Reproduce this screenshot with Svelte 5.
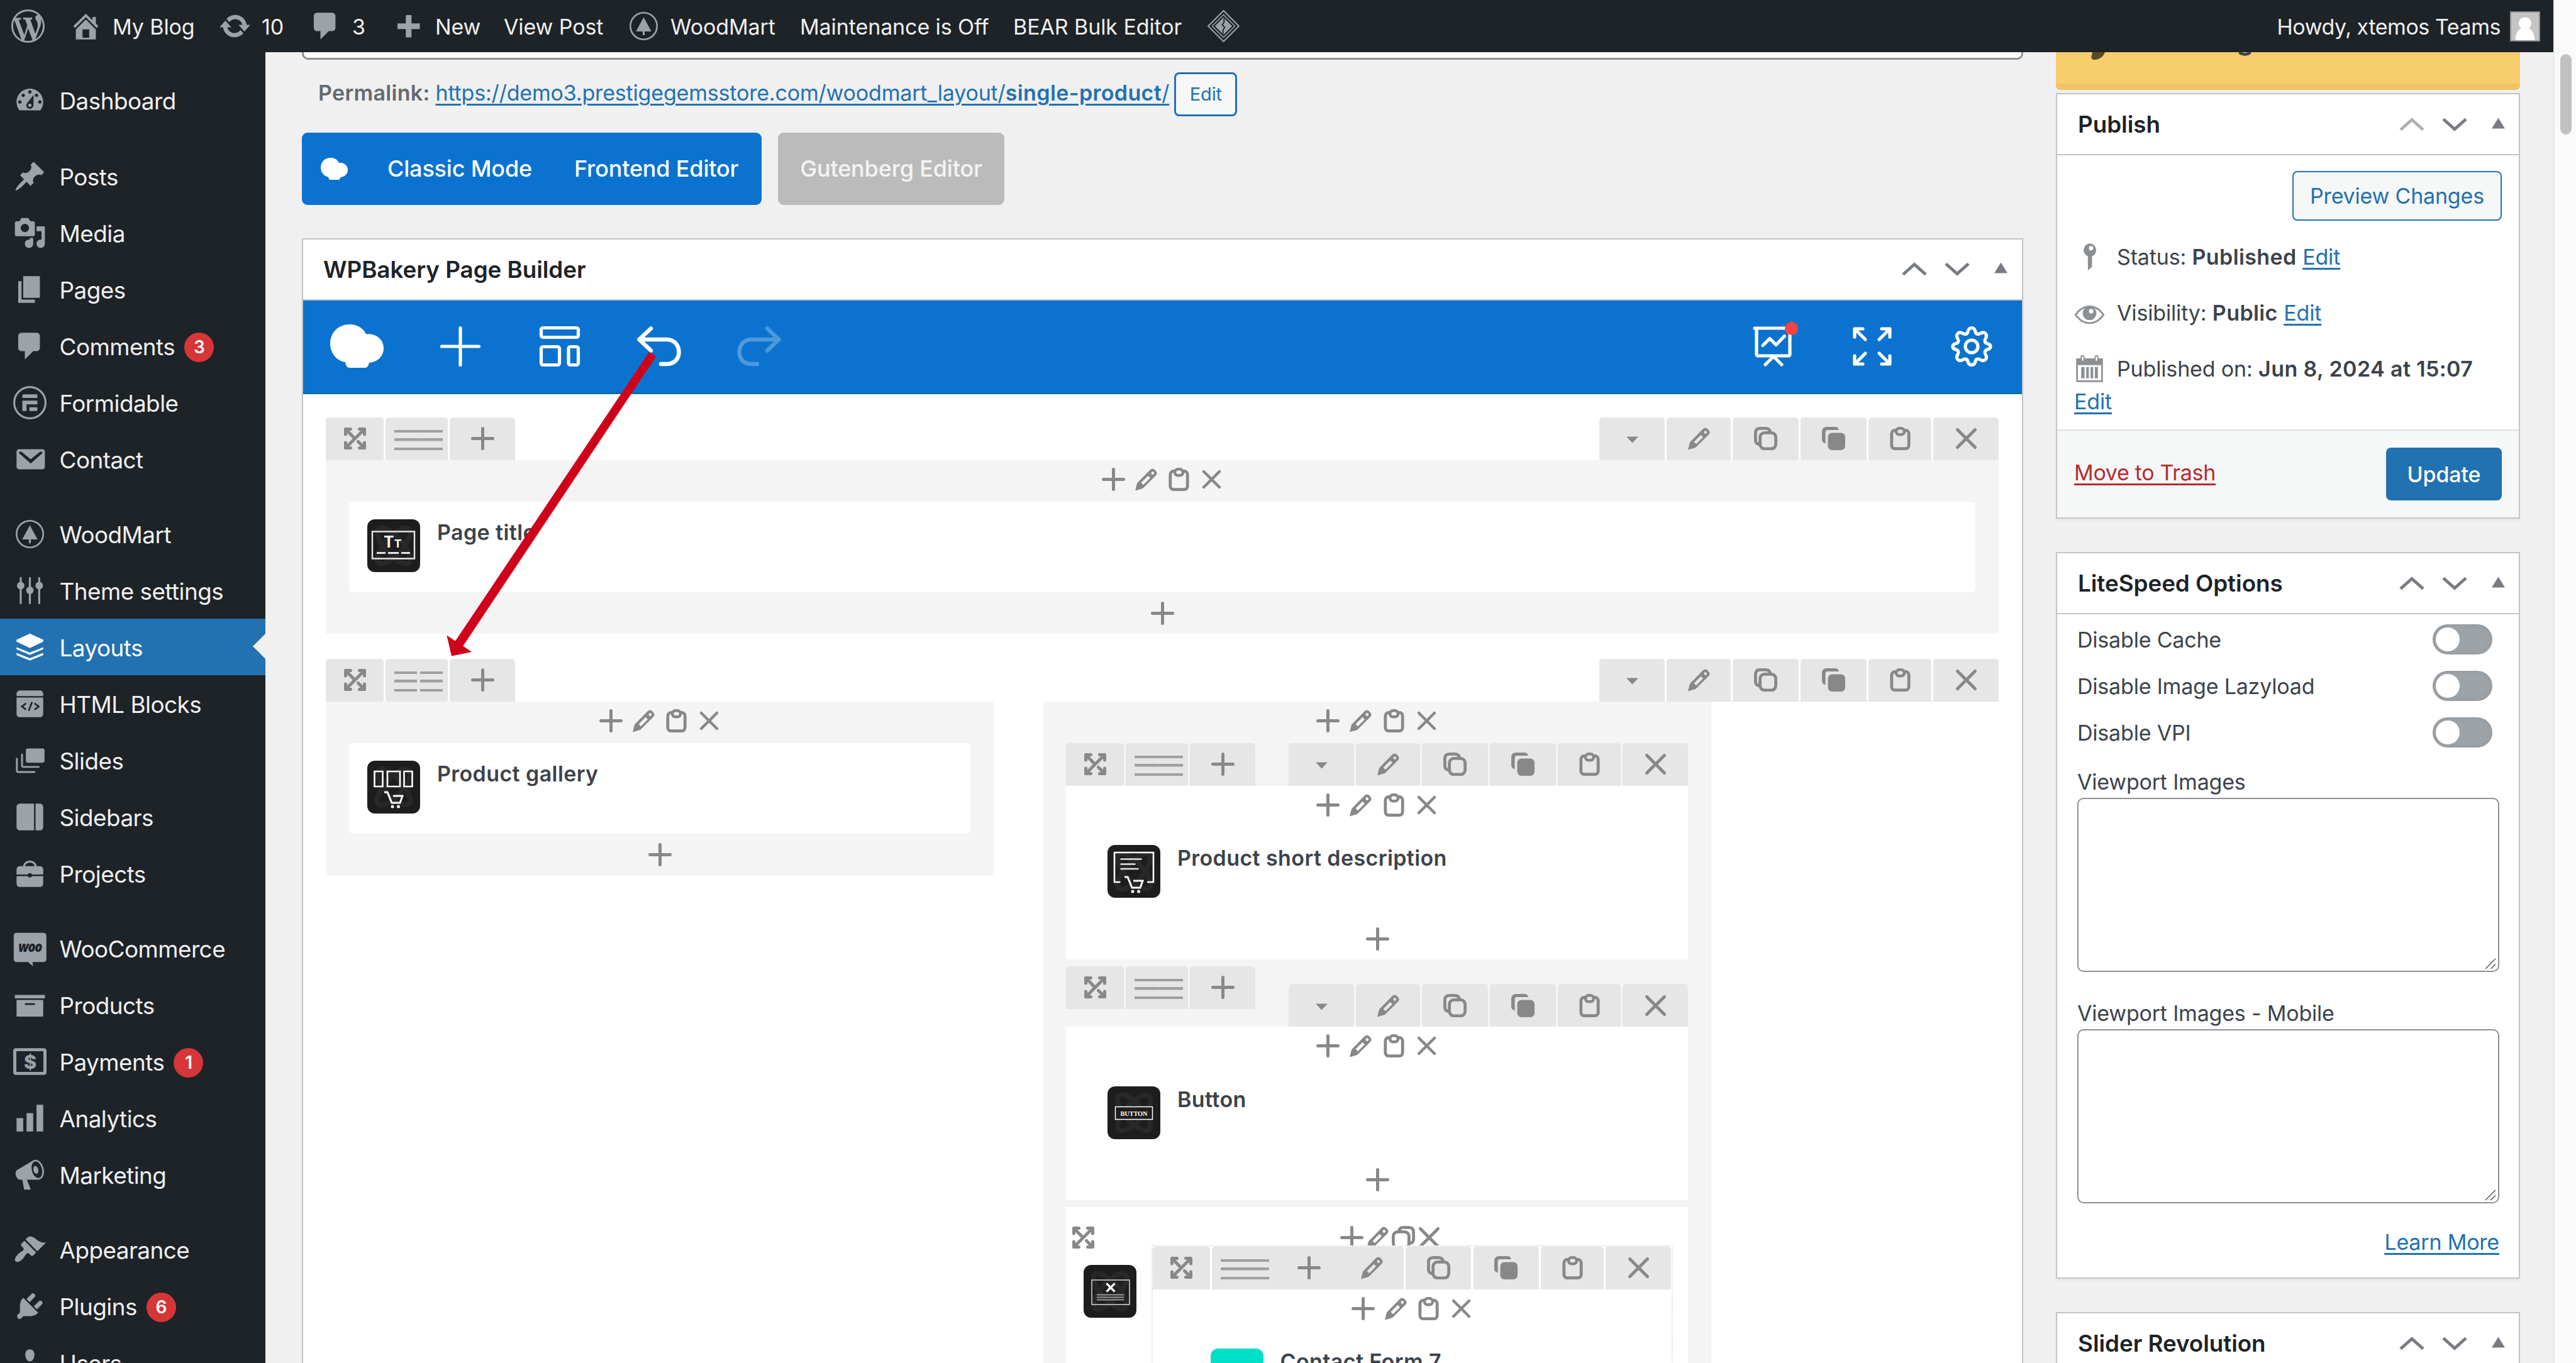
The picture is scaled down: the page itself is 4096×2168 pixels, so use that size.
<script>
  const icons = {
    wordpress: '<path d="M20 10c0-5.51-4.49-10-10-10C4.48 0 0 4.49 0 10c0 5.52 4.48 10 10 10 5.51 0 10-4.48 10-10zM7.78 15.37L4.37 6.22c.55-.02 1.17-.08 1.17-.08.5-.06.44-1.13-.06-1.11 0 0-1.45.11-2.37.11-.18 0-.37 0-.58-.01C4.12 2.69 6.87 1.11 10 1.11c2.33 0 4.45.87 6.05 2.34-.68-.11-1.65.39-1.65 1.58 0 .74.45 1.36.9 2.1.35.61.55 1.36.55 2.46 0 1.49-1.4 5-1.4 5l-3.03-8.37c.54-.02.82-.17.82-.17.5-.05.44-1.25-.06-1.22 0 0-1.44.12-2.38.12-.87 0-2.33-.12-2.33-.12-.5-.03-.56 1.2-.06 1.22l.92.08 1.26 3.41zM17.41 10c.24-.64.74-1.87.43-4.25.7 1.29 1.05 2.71 1.05 4.25 0 3.29-1.73 6.24-4.4 7.78.97-2.59 1.94-5.2 2.92-7.78zM6.1 18.09C3.12 16.65 1.11 13.53 1.11 10c0-1.3.23-2.48.72-3.59C3.25 10.3 4.67 14.2 6.1 18.09zm4.03-6.63l2.58 6.98c-.86.29-1.76.45-2.71.45-.79 0-1.57-.11-2.29-.33.81-2.38 1.62-4.74 2.42-7.1z"/>',
    home: '<path fill-rule="evenodd" d="M16 8.5l1.53 1.53-1.06 1.06L10 4.6l-6.47 6.49-1.06-1.06L10 2.5l4 4v-2h2v4zm-6-2.46l6 5.99V18H4v-5.97zM12 17v-5H8v5h4z"/>',
    update: '<path d="M10.2 3.28c3.53 0 6.43 2.61 6.92 6h2.08l-3.5 4-3.5-4h2.32c-.45-1.97-2.21-3.45-4.32-3.45-1.45 0-2.73.71-3.54 1.78L4.95 5.66C6.23 4.2 8.11 3.28 10.2 3.28zm-.4 13.44c-3.52 0-6.43-2.61-6.92-6H.8l3.5-4c1.17 1.33 2.33 2.67 3.5 4H5.48c.45 1.97 2.21 3.45 4.32 3.45 1.45 0 2.73-.71 3.54-1.78l1.71 1.95c-1.28 1.46-3.15 2.38-5.25 2.38z"/>',
    comments: '<path d="M5 2h9c1.1 0 2 .9 2 2v7c0 1.1-.9 2-2 2h-2l-5 5v-5H5c-1.1 0-2-.9-2-2V4c0-1.1.9-2 2-2z"/>',
    add: '<path d="M8.4 3.4h3.4v5h5v3.4h-5v5H8.400v-5h-5V8.400h5z"/>',
    woodmart: '<circle cx="10" cy="10" r="8" fill="none" stroke="currentColor" stroke-width="1"/><path d="M10 4.7l4.6 8.500h-4v2.300H9.400v-2.300h-4z"/>',
    diamond: '<path fill="none" stroke="currentColor" stroke-width=".8" d="M10 .8L19.200 10 10 19.200.8 10z"/><path fill="none" stroke="currentColor" stroke-width=".6" d="M10 3.200L16.800 10 10 16.800 3.200 10z"/><path d="M10 4.800L15.200 10 10 15.200 4.800 10z"/><path fill="none" stroke="#1d2327" stroke-width=".7" d="M10.300 5.500v2.200L9.200 9.300l1.500 1.500-1 1.600v2.200"/>',
    dashboard: '<path fill-rule="evenodd" d="M3.760 16h12.480c1.100-1.370 1.760-3.110 1.760-5 0-4.420-3.580-8-8-8s-8 3.580-8 8c0 1.890.66 3.630 1.760 5zM10 4c.55 0 1 .45 1 1s-.45 1-1 1-1-.45-1-1 .45-1 1-1zM6 6c.55 0 1 .45 1 1s-.45 1-1 1-1-.45-1-1 .45-1 1-1zm8 0c.55 0 1 .45 1 1s-.45 1-1 1-1-.45-1-1 .45-1 1-1zm-1.800.8L8.400 11.600c-.3.4-.5.9-.5 1.400 0 1.150.95 2.100 2.100 2.100s2.100-.95 2.100-2.100zM4 10c.55 0 1 .45 1 1s-.45 1-1 1-1-.45-1-1 .45-1 1-1zm12 0c.55 0 1 .45 1 1s-.45 1-1 1-1-.45-1-1 .45-1 1-1zm-5 3c0-.55-.45-1-1-1s-1 .45-1 1 .45 1 1 1 1-.45 1-1z"/>',
    post: '<path d="M10.440 3.020l1.820-1.820 6.360 6.350-1.830 1.820c-1.050-.68-2.480-.57-3.410.36l-.75.75c-.92.93-1.040 2.350-.35 3.410l-1.830 1.820-2.410-2.410-2.800 2.790c-.42.42-3.380 2.710-3.800 2.290s1.860-3.390 2.280-3.810l2.790-2.790L4.100 9.360l1.830-1.820c1.050.69 2.480.57 3.400-.36l.75-.75c.93-.92 1.050-2.350.36-3.410z"/>',
    media: '<path d="M13 11V4c0-.55-.45-1-1-1h-1.670L9 1H5L3.670 3H2c-.55 0-1 .45-1 1v7c0 .55.45 1 1 1h10c.55 0 1-.45 1-1zM7 4.500c1.380 0 2.500 1.120 2.500 2.500S8.380 9.500 7 9.500 4.500 8.380 4.500 7 5.620 4.500 7 4.500zM14 6h5v10.500c0 1.380-1.120 2.500-2.500 2.500S14 17.880 14 16.500s1.120-2.500 2.500-2.500c.17 0 .34.02.5.05V9h-3V6zm-4 8.050V13h2v3.500c0 1.380-1.120 2.500-2.500 2.500S7 17.880 7 16.500 8.120 14 9.500 14c.17 0 .34.02.5.05z"/>',
    page: '<path d="M6 15V2h10v13H6zm-1 1h8v2H3V5h2v11z"/>',
    formidable: '<circle cx="10" cy="10" r="9.400" fill="none" stroke="currentColor" stroke-width="1.200"/><path d="M6.300 5h8.200v2.200H5.500V5.800c0-.5.300-.8.800-.8zM5.500 8.800h9V11H8v4H5.500zM9.700 12.700h4.800v1.500c0 .5-.3.800-.8.800h-4z"/>',
    email: '<path d="M3.500 4h14c.83 0 1.500.67 1.500 1.500v9c0 .83-.67 1.500-1.500 1.500h-14c-.83 0-1.500-.67-1.500-1.500v-9C2 4.670 2.670 4 3.500 4z"/><path fill="#1d2327" d="M3.700 5.600c.5-.4.900-.3 1.400.1l5.400 4.300 5.400-4.300c.5-.4.900-.5 1.400-.1.300.3.300.6-.1 1l-6.700 5.900-6.700-5.900c-.4-.4-.4-.7-.1-1z"/>',
    sliders: '<path d="M3.900 2h1.200v16H3.900zM9.400 2h1.200v16H9.400zM15 2h1.200v16H15z"/><circle cx="4.500" cy="7" r="2.250"/><circle cx="10" cy="9.800" r="2.250"/><circle cx="15.600" cy="7" r="2.250"/>',
    layers: '<path d="M10 1.800l8 3.700v1.200l-8 3.800-8-3.800V5.500z"/><path d="M2 10l8 3.200L18 10v1.200l-8 3.400-8-3.400zM2 13.400l8 3.200 8-3.200v1.300L10 18l-8-3.300z"/>',
    code: '<path d="M4 2h12c1.100 0 2 .9 2 2v1.400H2V4c0-1.100.9-2 2-2zM2 6.200h16V16c0 1.100-.9 2-2 2H4c-1.100 0-2-.9-2-2z"/><path fill="none" stroke="#1d2327" stroke-width="1" d="M7.700 9.700L5.200 11.600l2.500 1.900M12.800 9.700l2.500 1.900-2.500 1.900M11.300 9l-2 5.200"/>',
    slides: '<rect x="7.600" y="2.800" width="11.200" height="8.600" rx="1.300"/><path fill="none" stroke="currentColor" stroke-width="1.100" stroke-linecap="round" d="M5.300 6.500v6.400c0 .6.300 1 1 1h9M2.200 9v7c0 .6.400 1 1 1h9.600"/>',
    sidebars: '<path d="M4 2h8.500v16H4c-1.100 0-2-.9-2-2V4c0-1.100.9-2 2-2zM13.400 2H16c1.100 0 2 .9 2 2v12c0 1.100-.9 2-2 2h-2.600z"/>',
    portfolio: '<path fill="none" stroke="currentColor" stroke-width="1.200" d="M6.500 6c0-1.800 1.400-3.200 3.500-3.200s3.500 1.400 3.500 3.200"/><path d="M4 5.600h12c1.100 0 2 .9 2 2v3h-6.700a1.400 1.400 0 0 0-2.600 0H2v-3c0-1.100.9-2 2-2zM2 11.500h6.700a1.400 1.400 0 0 0 2.600 0H18V16c0 1.100-.9 2-2 2H4c-1.100 0-2-.9-2-2z"/>',
    woo: '<path d="M2 .7h16.200c1 0 1.700.7 1.700 1.700v14.100c0 1-.7 1.700-1.700 1.700h-6.600l.3 2.600-3-2.600H2c-1 0-1.700-.7-1.700-1.700V2.400C.3 1.400 1 .7 2 .7z"/><text x="10.100" y="12" text-anchor="middle" font-family="Open Sans, sans-serif" font-size="8.800" font-weight="800" font-style="italic" fill="#1d2327" textLength="14" lengthAdjust="spacingAndGlyphs">woo</text>',
    products: '<path d="M19 4v2H1V4h18zM2 7h16v10H2V7zm11 3V9H7v1h6z"/>',
    payments: '<path fill-rule="evenodd" d="M1.500 2h17c.8 0 1.500.7 1.500 1.500v13c0 .8-.7 1.500-1.500 1.500h-17C.7 18 0 17.300 0 16.500v-13C0 2.700.7 2 1.500 2zM1.900 3.800v12.400h16.200V3.800z"/><text x="10" y="14.200" text-anchor="middle" font-family="Inter, sans-serif" font-size="11.500" font-weight="800">$</text>',
    chart: '<path d="M18 18V2h-4v16h4zm-6 0V7H8v11h4zm-6 0v-8H2v8h4z"/>',
    megaphone: '<path fill-rule="evenodd" d="M18.150 5.940c.46 1.620.38 3.220-.02 4.480-.42 1.280-1.260 2.180-2.300 2.480-.16.06-.26.06-.4.06-.06.02-.12.02-.18.02-.06.02-.14.02-.22.02h-6.800l2.220 5.500c.02.14-.06.26-.14.34-.08.1-.24.16-.34.16H6.950c-.1 0-.26-.06-.34-.16-.08-.08-.16-.2-.14-.34l-1-5.500H4.250l-.02-.02c-.5.06-1.080-.18-1.540-.62s-.88-1.080-1.060-1.880c-.24-.8-.2-1.560-.02-2.200.18-.62.58-1.080 1.060-1.300l.02-.02 9-5.400c.1-.06.18-.1.24-.16.06-.04.14-.08.24-.12.16-.08.28-.12.5-.18 1.040-.3 2.240.1 3.220.98s1.840 2.240 2.260 3.860zm-2.580 5.980h-.02c.4-.1.74-.34 1.040-.7.58-.7.86-1.760.86-3.040 0-.64-.1-1.300-.28-1.980-.34-1.360-1.020-2.500-1.780-3.240s-1.680-1.100-2.460-.88c-.82.22-1.400.96-1.700 2-.32 1.040-.28 2.360.06 3.720.38 1.360 1 2.500 1.800 3.240.78.74 1.620 1.100 2.480.88zm-2.540-7.080c.22-.04.42-.02.62.04.38.16.76.48 1.020 1s.42 1.200.42 1.780c0 .3-.04.56-.12.8-.18.48-.44.84-.86.94-.34.1-.8-.06-1.140-.4s-.64-.86-.78-1.500c-.18-.62-.12-1.240.02-1.720s.48-.84.82-.94z"/>',
    appearance: '<path d="M14.480 11.060L7.410 3.990l1.500-1.500c.5-.56 2.300-.47 3.510.32 1.210.8 1.430 1.280 2.910 2.100 1.180.64 2.450 1.260 4.450.85zm-.71.71L6.700 4.700 4.930 6.470c-.39.39-.39 1.020 0 1.410l1.060 1.060c.39.39.39 1.030 0 1.420-.6.6-1.430 1.110-2.210 1.690-.35.26-.7.53-1.010.84C1.430 14.230.4 16.080 1.400 17.070c.99 1 2.840-.03 4.180-1.360.31-.31.58-.66.85-1.020.57-.78 1.080-1.610 1.690-2.210.39-.39 1.020-.39 1.410 0l1.060 1.060c.39.39 1.020.39 1.410 0z"/>',
    plugins: '<path d="M13.110 4.360L9.870 7.600 8 5.730l3.240-3.240c.35-.34 1.050-.2 1.560.32.52.51.66 1.210.31 1.550zm-8 1.770l.91-1.120 9.010 9.010-1.190.84c-.71.71-2.630 1.160-3.820 1.160H6.140L4.900 17.260c-.59.59-1.540.59-2.120 0-.59-.58-.59-1.530 0-2.120l1.240-1.240v-3.880c0-1.130.4-3.190 1.090-3.890zm7.260 3.970l3.240-3.240c.34-.35 1.040-.21 1.550.31.52.51.66 1.210.31 1.550l-3.240 3.250z"/>',
    users: '<path d="M10 9.250c-2.270 0-2.730-3.440-2.730-3.440C7 4.020 7.820 2 9.970 2c2.160 0 2.980 2.020 2.710 3.810 0 0-.41 3.440-2.680 3.440zm0 2.570L12.720 10c2.390 0 4.520 2.330 4.520 4.530v2.490s-3.650 1.130-7.240 1.130c-3.650 0-7.240-1.130-7.240-1.130v-2.490c0-2.250 1.940-4.480 4.470-4.480z"/>',
    pin: '<path fill-rule="evenodd" d="M10 2a4 4 0 0 1 1.500 7.700V16L9 18.200V9.700A4 4 0 0 1 10 2zm.9 1.500a1.300 1.300 0 1 0 0 2.600 1.300 1.300 0 0 0 0-2.600z"/>',
    eye: '<g transform="translate(0 1.200)"><path fill-rule="evenodd" d="M10 4.500c4 0 7 2.500 9 5.500-2 3-5 5.500-9 5.500S3 13 1 10c2-3 5-5.500 9-5.500zm0 1C6.800 5.500 4.200 7.400 2.300 10c1.900 2.600 4.500 4.500 7.700 4.500s5.800-1.900 7.700-4.500C15.800 7.400 13.200 5.500 10 5.500z"/><path fill-rule="evenodd" d="M10 5a4 4 0 1 1 0 8.200A4 4 0 0 1 10 5zm1 1.500a1.400 1.400 0 1 0 0 2.800 1.400 1.400 0 0 0 0-2.800z"/></g>',
    calendar: '<path fill-rule="evenodd" d="M2 3.800h2.600V3c0-1.600 2.400-1.600 2.400 0v.8h6V3c0-1.600 2.400-1.600 2.400 0v.8H18V18H2zM5.400 3v2.200h.9V3c0-.5-.9-.5-.9 0zm8.300 0v2.200h.9V3c0-.5-.9-.5-.9 0zM3 7.800V17h14V7.800z"/><path d="M5 9h2v6.800H5zM8 9h1.600v6.800H8zM10.600 9h1.600v6.800h-1.600zM13.200 9h1.800v6.800h-1.800z"/>'
  };

  // Line icons of the page builder, drawn on a 37 × 37 grid
  const tools = {
    move: '<path d="M3.500 12V3.500h8M25.500 3.500h8V12M33.500 25v8.500h-8M11.500 33.500h-8V25M3.500 33.500l30-30M3.500 3.500l13.500 14M23.500 23.500l10 10" stroke-width="5"/>',
    plus: '<path d="M18.500 2.500v32M2.500 18.500h32" stroke-width="5"/>',
    pencil: '<path fill="currentColor" stroke="none" fill-rule="evenodd" d="M1 36.500L4 24.500 25 3q3.500-3 7 0l2 2.200q3.200 3.500 0 7L13 33zM10.500 23.800l3.500 3.500L25 16.200l-3.500-3.500zM28.800 6.300a2.300 2.300 0 1 0 0 4.600 2.300 2.300 0 0 0 0-4.600z"/>',
    copy: '<path d="M7 27.500c-3-1-4.600-3-4.600-6V10c0-5 2.600-7.600 7.600-7.600h8c4.500 0 7.200 2.200 7.600 6" stroke-width="4.800"/><rect x="9.600" y="9.400" width="25" height="25.400" rx="7" stroke-width="4.800"/>',
    copyFlip: '<path d="M30 27.500c3-1 4.600-3 4.600-6V10c0-5-2.600-7.600-7.600-7.600h-8c-4.500 0-7.200 2.200-7.600 6" stroke-width="4.800"/><rect x="2.400" y="9.400" width="25" height="25.400" rx="7" stroke-width="4.800"/>',
    clone: '<path fill="currentColor" stroke="none" d="M0 7.500C0 3 3 0 7.500 0H21c3.500 0 5.500 2 6 5H9C7 5 5.600 6.400 5.600 8.500v18C2 25.500 0 23.500 0 20z"/><rect fill="currentColor" stroke="none" x="9.500" y="9.500" width="27.500" height="27.500" rx="6.500"/>',
    clip: '<path d="M12 5.400H10c-3 0-5.200 2.600-5.200 5.600v18c0 3.500 2 5.600 5.200 5.600h17c3.200 0 5.200-2.100 5.200-5.600V11c0-3-2.200-5.600-5.200-5.600h-2" stroke-width="4.800"/><rect x="12" y="2.300" width="13" height="10" rx="5" stroke-width="4.600"/>',
    close: '<path d="M4.500 4.500l28 28M32.500 4.500l-28 28" stroke-width="5"/>',
    caret: '<path fill="currentColor" stroke="none" d="M9 15.500h19l-9.500 10z"/>'
  };

  const backdrop = '<rect width="84" height="84" rx="12" fill="#1d1d1d"/><g fill="none" stroke="#282828" stroke-width="8"><ellipse cx="42" cy="42" rx="14" ry="36" transform="rotate(42 42 42)"/><ellipse cx="42" cy="42" rx="14" ry="36" transform="rotate(-42 42 42)"/></g>';
  const cart = '<path fill="none" stroke="#fff" stroke-width="3" d="M0 2h5l7 17h13l4-11H14"/><circle cx="13" cy="25" r="2.500" fill="#fff"/><circle cx="22.500" cy="25" r="2.500" fill="#fff"/>';

  const thumbs = {
    title: backdrop + '<rect x="8" y="19.500" width="67" height="43" fill="none" stroke="#e4e4e4" stroke-width="2.500"/><text x="26.500" y="44.500" font-family="Roboto, sans-serif" font-weight="700" font-size="25" fill="#fff">T</text><text x="43" y="44.500" font-family="Roboto, sans-serif" font-weight="700" font-size="18" fill="#fff">T</text><path stroke="#e4e4e4" stroke-width="3" d="M15 53.500h14M33 53.500h17M54 53.500h14"/>',
    gallery: backdrop + '<g fill="none" stroke="#fff" stroke-width="2.600"><path d="M11.500 17h13v24h-13zM32 17h20v24H32zM58.500 17h13v24h-13z"/></g><g transform="translate(27 48)">' + cart + '</g>',
    description: backdrop + '<path fill="none" stroke="#fff" stroke-width="2.600" d="M20.500 59H11V12h62v47H63"/><path stroke="#e4e4e4" stroke-width="2.600" d="M20.500 22.500h34M20.500 30.500h24M20.500 38h29"/><g transform="translate(27 49)">' + cart + '</g>',
    button: backdrop + '<rect x="12.500" y="32.500" width="59" height="20" fill="#1d1d1d" stroke="#fff" stroke-width="1.500"/><text x="42" y="46.800" text-anchor="middle" font-family="Liberation Serif, serif" font-weight="700" font-size="10.500" fill="#fff" textLength="43">BUTTON</text>',
    popup: backdrop + '<rect x="13" y="24" width="60" height="39" fill="none" stroke="#aaa" stroke-width="2"/><path stroke="#fff" stroke-width="3.500" d="M36.500 29.500l13 13M49.500 29.500l-13 13"/><path stroke="#999" stroke-width="2.200" d="M21 47.500h43M21 51.500h43M21 55.500h43"/>',
    contact: '<rect width="84" height="84" rx="12" fill="#00dfc8"/>'
  };

  const barItems = [
    { icon: 'wordpress' },
    { icon: 'home', label: 'My Blog' },
    { icon: 'update', label: '10' },
    { icon: 'comments', label: '3' },
    { icon: 'add', label: 'New' },
    { label: 'View Post' },
    { icon: 'woodmart', label: 'WoodMart' },
    { label: 'Maintenance is Off' },
    { label: 'BEAR Bulk Editor' },
    { icon: 'diamond' }
  ];

  const menuGroups = [
    [{ icon: 'dashboard', label: 'Dashboard' }],
    [
      { icon: 'post', label: 'Posts' },
      { icon: 'media', label: 'Media' },
      { icon: 'page', label: 'Pages' },
      { icon: 'comments', label: 'Comments', count: 3 },
      { icon: 'formidable', label: 'Formidable' },
      { icon: 'email', label: 'Contact' }
    ],
    [
      { icon: 'woodmart', label: 'WoodMart' },
      { icon: 'sliders', label: 'Theme settings' },
      { icon: 'layers', label: 'Layouts', current: true },
      { icon: 'code', label: 'HTML Blocks' },
      { icon: 'slides', label: 'Slides' },
      { icon: 'sidebars', label: 'Sidebars' },
      { icon: 'portfolio', label: 'Projects' }
    ],
    [
      { icon: 'woo', label: 'WooCommerce' },
      { icon: 'products', label: 'Products' },
      { icon: 'payments', label: 'Payments', count: 1 },
      { icon: 'chart', label: 'Analytics' },
      { icon: 'megaphone', label: 'Marketing' }
    ],
    [
      { icon: 'appearance', label: 'Appearance' },
      { icon: 'plugins', label: 'Plugins', count: 6 },
      { icon: 'users', label: 'Users' }
    ]
  ];

  let toggles = $state([
    { label: 'Disable Cache', on: false },
    { label: 'Disable Image Lazyload', on: false },
    { label: 'Disable VPI', on: false }
  ]);
</script>

{#snippet dashicon(name)}
  <svg class="dashicon" viewBox="0 0 20 20" fill="currentColor">{@html icons[name]}</svg>
{/snippet}

{#snippet tool(name)}
  <svg class="tool" viewBox="0 0 37 37" fill="none" stroke="currentColor" stroke-linecap="round" stroke-linejoin="round">{@html tools[name]}</svg>
{/snippet}

{#snippet bakery()}
  <svg class="bakery" viewBox="0 0 85 69" fill="#fff">
    <path d="M31 0c12 0 22 6 26 15.500C73 14 85 24 85 38c0 13-10 22-23 23-1 5-3 8-7 8H31c-4 0-6-3-7-9C10 58 0 45 0 31 0 13 13 0 31 0z" />
  </svg>
{/snippet}

{#snippet boxHeader(title, first)}
  <header class="box-header">
    <h2>{title}</h2>
    <svg class="handles" viewBox="0 0 168 24" fill="none" stroke="#787c82" stroke-width="5">
      <path class:faded={first} d="M2 20.500L20 4.500l18 16" />
      <path d="M70 3.500l18 16 18-16" />
      <path fill="#787c82" stroke="none" d="M157.500 1.500L168 18.500h-21z" />
    </svg>
  </header>
{/snippet}

{#snippet leftTabs(split)}
  <div class="tabs">
    <button class="tab drag">{@render tool('move')}</button>
    <button class="tab lines">
      <span class="bars" class:split><i></i><i></i></span>
    </button>
    <button class="tab">{@render tool('plus')}</button>
  </div>
{/snippet}

{#snippet rightTabs()}
  <div class="tabs right">
    <button class="tab">{@render tool('caret')}</button>
    <button class="tab w-pencil">{@render tool('pencil')}</button>
    <button class="tab w-copy">{@render tool('copy')}</button>
    <button class="tab w-copy">{@render tool('clone')}</button>
    <button class="tab w-clip">{@render tool('clip')}</button>
    <button class="tab">{@render tool('close')}</button>
  </div>
{/snippet}

{#snippet columnTools()}
  <div class="column-tools">
    {#each ['plus', 'pencil', 'clip', 'close'] as name}
      <span class="cell" class:small={name === 'close'}>{@render tool(name)}</span>
    {/each}
  </div>
{/snippet}

{#snippet element(thumb, title)}
  <div class="element">
    <svg class="thumb" viewBox="0 0 84 84">{@html thumbs[thumb]}</svg>
    <h4>{title}</h4>
  </div>
{/snippet}

{#snippet column(thumb, title)}
  {@render columnTools()}
  {@render element(thumb, title)}
  <div class="append">{@render tool('plus')}</div>
{/snippet}

<div class="screen">
  <div class="window">
    <nav class="adminbar">
      {#each barItems as item}
        <span class="bar-item">
          {#if item.icon}{@render dashicon(item.icon)}{/if}
          {#if item.label}<span class="bar-label">{item.label}</span>{/if}
        </span>
      {/each}
      <span class="account">
        <span class="bar-label">Howdy, xtemos Teams</span>
        <svg class="avatar" viewBox="0 0 48 48">
          <rect x="1" y="1" width="46" height="46" fill="#c4c4c4" stroke="#8c8f94" stroke-width="2" />
          <path fill="#fff" d="M24 9.500c6 0 10 4 10 9.500 0 3.500-1.500 6.500-4 8 5 2 9 8 9.500 19h-31C9 35 12.500 29 18 27c-2.500-1.500-4-4.500-4-8 0-5.500 4-9.500 10-9.500z" />
        </svg>
      </span>
    </nav>

    <div class="body">
      <aside class="menu">
        {#each menuGroups as group}
          <ul>
            {#each group as item}
              <li class:current={item.current}>
                {@render dashicon(item.icon)}
                <span class="label">{item.label}</span>
                {#if item.count}<span class="count">{item.count}</span>{/if}
              </li>
            {/each}
          </ul>
        {/each}
      </aside>

      <main>
        <div class="title-field"></div>
        <div class="permalink">
          <strong>Permalink:</strong>
          <a href="#permalink">https://demo3.prestigegemsstore.com/woodmart_layout/<b>single-product</b>/</a>
          <button class="edit-slug">Edit</button>
        </div>
        <div class="modes">
          <div class="mode-switch">
            {@render bakery()}
            <span class="classic">Classic Mode</span>
            <span>Frontend Editor</span>
          </div>
          <button class="gutenberg">Gutenberg Editor</button>
        </div>

        <section class="box builder">
          {@render boxHeader('WPBakery Page Builder', false)}
          <div class="toolbar">
            <span class="logo">{@render bakery()}</span>
            <svg viewBox="0 0 64 64"><path d="M32 2.500v59M2.500 32h59" /></svg>
            <svg viewBox="0 0 64 64">
              <rect x="2.500" y="2.500" width="59" height="15" rx="3" />
              <rect x="2.500" y="32.500" width="29" height="29" rx="3" />
              <rect x="46" y="32.500" width="15.500" height="29" rx="3" />
            </svg>
            <svg class="undo" viewBox="0 0 70 64"><path d="M22 3.500L3.500 21 22 38.500M3.500 21H47c12 0 19.500 9 19.500 20S59 60 47 60h-9" /></svg>
            <svg class="redo" viewBox="0 0 70 64"><path d="M48 3.500L66.500 21 48 38.500M66.500 21H23C11 21 3.500 30 3.500 41S11 60 23 60h9" /></svg>
            <div class="toolbar-right">
              <span class="seo">
                <svg viewBox="0 0 64 64">
                  <path d="M3 3h58M6 3v41c0 2 1 3 3 3h47c2 0 3-1 3-3V3M33 48L20 61M33 48l13 13M16 30.500l11-11 10 10 13.500-14" />
                </svg>
                <i class="dot"></i>
              </span>
              <svg viewBox="0 0 64 64">
                <path d="M4 17V4h13M4 4l17 17M47 4h13v13M60 4L43 21M60 47v13H47M60 60L43 43M17 60H4V47M4 60l17-17" />
              </svg>
              <svg viewBox="0 0 64 64">
                <path d="M32 2.500c3 0 5 2 6 6s4 5 7.500 3 6.500-2 8.500 0 2 5 0 8.500-1 6.500 3 7.500 5 2.500 5 4.500-1.500 4-5 5-5 4-3 7.500 2 6.500 0 8.500-5 2-8.500 0-6.500-1-7.500 3-3 5.500-6 5.500-5-1.500-6-5.500-4-5-7.500-3-6.500 2-8.500 0-2-5 0-8.500 1-6.500-3-7.500-5-3-5-5 1-3.500 5-4.500 5-4 3-7.500-2-6.500 0-8.500 5-2 8.500 0 6.500 1 7.500-3 3-6 6-6z" />
                <circle cx="32" cy="32" r="10" />
              </svg>
            </div>
          </div>

          <div class="canvas">
            <div class="row">
              <div class="row-tabs">{@render leftTabs(false)}{@render rightTabs()}</div>
              <div class="column">{@render column('title', 'Page title')}</div>
            </div>

            <div class="row">
              <div class="row-tabs">{@render leftTabs(true)}{@render rightTabs()}</div>
              <div class="columns">
                <div class="column third">{@render column('gallery', 'Product gallery')}</div>
                <div class="column third">
                  {@render columnTools()}
                  <div class="inner-row">
                    <div class="row-tabs">{@render leftTabs(false)}{@render rightTabs()}</div>
                    <div class="column">{@render column('description', 'Product short description')}</div>
                  </div>
                  <div class="inner-row staggered">
                    <div class="row-tabs">{@render leftTabs(false)}{@render rightTabs()}</div>
                    <div class="column">{@render column('button', 'Button')}</div>
                  </div>
                  <div class="popup">
                    <div class="popup-tools">
                      {@render tool('move')}
                      <div class="popup-actions">
                        {#each ['plus', 'pencil', 'copyFlip', 'close'] as name}
                          {@render tool(name)}
                        {/each}
                      </div>
                    </div>
                    <div class="popup-content">
                      <svg class="thumb" viewBox="0 0 84 84">{@html thumbs.popup}</svg>
                      <div class="nested">
                        <div class="nested-tabs">
                          <button class="tab n-move">{@render tool('move')}</button>
                          <button class="tab n-wide">
                            <span class="bars"><i></i><i></i></span>
                            {@render tool('plus')}
                            {@render tool('pencil')}
                          </button>
                          <button class="tab">{@render tool('copy')}</button>
                          <button class="tab">{@render tool('clone')}</button>
                          <button class="tab w-clip">{@render tool('clip')}</button>
                          <button class="tab">{@render tool('close')}</button>
                        </div>
                        {@render columnTools()}
                        {@render element('contact', 'Contact Form 7')}
                      </div>
                    </div>
                  </div>
                </div>
              </div>
            </div>
          </div>
        </section>
      </main>

      <aside class="side">
        <div class="notice">
          <svg viewBox="0 0 738 60">
            <path fill="#5a4a27" d="M58 0h20c-2 6-8 12-17 12-5 0-5-4-4-7z" />
            <path fill="none" stroke="#3c434a" stroke-width="4.500" d="M292 0c3 4.500 14 4.500 17 0" />
          </svg>
        </div>

        <section class="box publish">
          {@render boxHeader('Publish', true)}
          <div class="preview"><button class="outline">Preview Changes</button></div>
          <p class="status">{@render dashicon('pin')}<span>Status: <b>Published</b> <a href="#status">Edit</a></span></p>
          <p class="status">{@render dashicon('eye')}<span>Visibility: <b>Public</b> <a href="#visibility">Edit</a></span></p>
          <p class="status">{@render dashicon('calendar')}<span>Published on: <b>Jun 8, 2024 at 15:07</b></span></p>
          <a class="edit-date" href="#date">Edit</a>
          <footer>
            <a class="trash" href="#trash">Move to Trash</a>
            <button class="primary">Update</button>
          </footer>
        </section>

        <section class="box litespeed">
          {@render boxHeader('LiteSpeed Options', false)}
          <div class="options">
            {#each toggles as item}
              <div class="option">
                <span>{item.label}</span>
                <button class="toggle" class:on={item.on} aria-label={item.label} onclick={() => (item.on = !item.on)}><i></i></button>
              </div>
            {/each}
            {#each ['Viewport Images', 'Viewport Images - Mobile'] as label}
              <div class="field">
                <span>{label}</span>
                <div class="textarea">
                  <svg viewBox="0 0 18 18" fill="none" stroke="#50575e" stroke-width="1.500"><path d="M1 17L17 1M9.500 17l7.500-7.500" /></svg>
                </div>
              </div>
            {/each}
            <a class="learn" href="#learn">Learn More</a>
          </div>
        </section>

        <section class="box">
          {@render boxHeader('Slider Revolution', false)}
          <div class="rest"></div>
        </section>
      </aside>
    </div>
  </div>
  <div class="scrollbar"><i></i></div>

  <!-- Arrow pointing from undo to the row layout switch -->
  <svg class="arrow" viewBox="0 0 4096 2168">
    <path fill="#d0021b" d="M1032.300 559.600L1043.200 567.300 736.300 1027.600 750 1036.900 718 1043.400 710.300 1010.400 724 1019.600z" />
  </svg>
</div>

<style>
  :global(body) {
    background: #f0f0f0;
    overflow: hidden;
  }

  .screen, .screen :global(*) {
    box-sizing: border-box;
  }

  .screen {
    position: relative;
    display: flex;
    width: 4096px;
    height: 2168px;
    overflow: hidden;
    background: #f0f0f0;
    color: #3c434a;
    font-family: Inter, "Liberation Sans", sans-serif;
    font-size: 34px;
    letter-spacing: -0.15px;
  }

  button {
    margin: 0;
    padding: 0;
    border: 0;
    background: none;
    color: inherit;
    font: inherit;
    letter-spacing: inherit;
  }

  h2, h4, p, ul {
    margin: 0;
    padding: 0;
  }

  a {
    color: #2271b1;
    text-decoration-thickness: 2.6px;
    text-underline-offset: 5px;
  }

  b, strong {
    font-weight: 600;
    letter-spacing: 0.4px;
  }

  svg {
    display: block;
    flex: none;
  }

  .window {
    width: 4060px;
    display: flex;
    flex-direction: column;
  }

  .dashicon {
    width: 53px;
    height: 53px;
    overflow: visible;
  }

  /* Admin bar */
  .adminbar {
    flex: none;
    height: 83px;
    padding: 0 21px 0 18px;
    display: grid;
    grid-template-columns: 92px 237px 144px 132px 178px 196px 275px 339px 308px 1fr 460px;
    align-items: center;
    background: #1d2327;
    color: #f0f0f1;
    letter-spacing: -0.1px;
    white-space: nowrap;
  }

  .bar-item {
    display: flex;
    align-items: center;
    gap: 16px;
  }

  .bar-item .dashicon {
    color: #9ca2a7;
  }

  .bar-label {
    padding-top: 2px;
  }

  .account {
    display: flex;
    align-items: center;
    justify-content: flex-end;
    gap: 15px;
    letter-spacing: -0.45px;
  }

  .avatar {
    width: 48px;
    height: 48px;
  }

  .body {
    flex: 1;
    min-height: 0;
    display: flex;
  }

  /* Menu */
  .menu {
    flex: none;
    width: 422px;
    padding-top: 31px;
    background: #1d2327;
    color: #f0f0f1;
    font-size: 36.800px;
    letter-spacing: -0.5px;
    overflow: hidden;
  }

  .menu ul {
    list-style: none;
    margin-bottom: 29px;
  }

  .menu ul:first-child {
    margin-bottom: 31px;
  }

  .menu li {
    position: relative;
    height: 90px;
    padding-left: 20.500px;
    display: flex;
    align-items: center;
  }

  .menu .dashicon {
    color: #9ca2a7;
  }

  .label {
    margin-left: 21px;
    padding-top: 3px;
  }

  .current {
    background: #2271b1;
    color: #fff;
  }

  .menu .current .dashicon {
    color: #fff;
  }

  .current::after {
    content: "";
    position: absolute;
    right: 0;
    top: 24px;
    border: 20.500px solid transparent;
    border-right-color: #f0f0f0;
    border-left: 0;
  }

  .count {
    width: 47px;
    height: 47px;
    margin: 4px 0 0 15px;
    border-radius: 50%;
    background: #d63638;
    color: #fff;
    font-size: 28px;
    font-weight: 600;
    line-height: 47px;
    text-align: center;
  }

  /* Editor column */
  main {
    flex: none;
    width: 2737px;
    margin-left: 58px;
  }

  .title-field {
    height: 11.500px;
    border: 3px solid #8c8f94;
    border-top: 0;
    border-radius: 0 0 10px 10px;
    background: #fff;
  }

  .permalink {
    height: 70px;
    margin-top: 20px;
    padding-left: 26px;
    display: flex;
    align-items: center;
    white-space: nowrap;
  }

  .permalink strong, .permalink a {
    margin-top: -4px;
  }

  .permalink strong {
    margin-right: 9px;
    color: #646970;
    letter-spacing: 0.3px;
  }

  .permalink a {
    letter-spacing: -0.18px;
  }

  .edit-slug {
    width: 100px;
    height: 70px;
    margin-left: 8px;
    border: 3px solid #2271b1;
    border-radius: 8px;
    background: #f6f7f7;
    color: #2271b1;
    font-size: 29px;
  }

  .modes {
    height: 115px;
    margin-top: 26px;
    display: flex;
    gap: 26px;
    font-size: 36px;
    letter-spacing: -0.18px;
    white-space: nowrap;
  }

  .mode-switch {
    width: 731px;
    padding-left: 30px;
    border-radius: 9px;
    background: #0b73cf;
    color: #fff;
    display: flex;
    align-items: center;
    font-weight: 500;
  }

  .mode-switch .bakery {
    width: 43px;
    height: 35px;
  }

  .classic {
    margin: 0 67px 0 63px;
  }

  .gutenberg {
    width: 360px;
    border-radius: 9px;
    background: #bbb;
    color: #f4f4f4;
    font-weight: 500;
  }

  .box {
    border: 2.600px solid #c3c4c7;
    background: #fff;
    box-shadow: 0 2.600px 2.600px rgba(0, 0, 0, 0.04);
  }

  .box-header {
    height: 97px;
    padding: 0 22px 0 32px;
    border-bottom: 2.600px solid #c3c4c7;
    display: flex;
    align-items: center;
    justify-content: space-between;
  }

  .side .box-header {
    padding-left: 33px;
  }

  h2 {
    color: #1d2327;
    font-size: 36.800px;
    font-weight: 600;
    letter-spacing: -0.05px;
    white-space: nowrap;
  }

  .handles {
    width: 168px;
    height: 24px;
    overflow: visible;
  }

  .faded {
    opacity: 0.6;
  }

  .builder {
    margin-top: 53px;
    height: 1900px;
  }

  .builder .box-header {
    padding-right: 23px;
  }

  .toolbar {
    height: 149px;
    padding: 0 48px 0 43px;
    border-bottom: 3px solid #0473aa;
    background: #0b73cf;
    display: flex;
    align-items: center;
  }

  .toolbar svg {
    width: 64px;
    height: 64px;
    fill: none;
    stroke: #fff;
    stroke-width: 5.200;
    stroke-linecap: round;
    stroke-linejoin: round;
    margin-right: 94px;
    overflow: visible;
  }

  .toolbar .logo svg {
    width: 85px;
    height: 69px;
    fill: #fff;
    stroke: none;
    margin-right: 90px;
  }

  .toolbar .undo, .toolbar .redo {
    width: 70px;
    margin: 0 89px 0 -3px;
    stroke-width: 6.500;
  }

  .toolbar .redo {
    margin-left: 0;
    opacity: 0.27;
  }

  .toolbar-right {
    margin-left: auto;
    display: flex;
    gap: 94px;
  }

  .toolbar-right svg {
    margin: 0;
  }

  .seo {
    position: relative;
  }

  .dot {
    position: absolute;
    left: 51px;
    top: -7px;
    width: 21px;
    height: 21px;
    border-radius: 50%;
    background: #ff4242;
  }

  /* Rows and columns */
  .canvas {
    padding: 37px 37px 0 36px;
    display: flex;
    flex-direction: column;
    gap: 40px;
  }

  .row-tabs, .nested-tabs {
    display: flex;
    justify-content: space-between;
    height: 68px;
  }

  .tabs {
    display: flex;
    gap: 3px;
    height: 68px;
  }

  .tab {
    width: 104px;
    border-radius: 5px 5px 0 0;
    background: #e6e6e6;
    display: flex;
    align-items: center;
    justify-content: center;
  }

  .tab.drag {
    width: 92px;
  }

  .tab.lines {
    width: 99px;
    padding-left: 6px;
  }

  .w-pencil {
    width: 102px;
  }

  .w-copy {
    width: 105px;
  }

  .w-clip {
    width: 100px;
  }

  .tool {
    width: 37px;
    height: 37px;
    color: #888;
  }

  .bars {
    display: flex;
    width: 77px;
    height: 32px;
    margin-top: 4px;
  }

  .bars i {
    flex: 1;
    border-top: 4.500px solid #a0a0a0;
    border-bottom: 4.500px solid #a0a0a0;
    background: linear-gradient(#a0a0a0, #a0a0a0) center / 100% 4.500px no-repeat;
  }

  .split {
    gap: 4.500px;
  }

  .column {
    height: 276px;
    padding: 0 37px;
    background: #f4f4f4;
  }

  .columns {
    display: flex;
    gap: 79px;
  }

  .third {
    width: 1062px;
  }

  .third:last-child {
    height: 1100px;
    padding: 0 37px 0 36px;
  }

  .column-tools {
    height: 66px;
    padding: 0 0 5px 1px;
    display: flex;
    align-items: center;
    justify-content: center;
  }

  .cell {
    width: 52.200px;
    display: flex;
    justify-content: center;
  }

  .small .tool {
    width: 33px;
    height: 33px;
  }

  .element {
    height: 144px;
    padding: 28.500px 29px;
    border-radius: 6px;
    background: #fff;
    display: flex;
    gap: 27px;
  }

  .thumb {
    width: 84px;
    height: 84px;
  }

  h4 {
    height: 42px;
    color: #3c434a;
    font-size: 34px;
    font-weight: 600;
    letter-spacing: 0.4px;
    line-height: 42px;
    white-space: nowrap;
  }

  .append {
    height: 66px;
    padding: 15px 0 0 1px;
    display: flex;
    justify-content: center;
  }

  .inner-row .column {
    background: #fff;
  }

  .staggered {
    margin-top: 11px;
  }

  .staggered .row-tabs {
    height: 96.500px;
  }

  .staggered .right {
    margin-top: 28.500px;
  }

  .popup {
    height: 400px;
    margin-top: 10.500px;
    background: #fff;
  }

  .popup-tools {
    position: relative;
    height: 61px;
    padding: 30px 0 0 9px;
  }

  .popup-actions {
    position: absolute;
    left: 436px;
    top: 30px;
    display: flex;
    gap: 4px;
  }

  .popup-content {
    position: relative;
    display: flex;
    gap: 24px;
    padding-left: 27.500px;
  }

  .popup-content > .thumb {
    margin-top: 31px;
  }

  .nested {
    width: 829px;
    border: 2.600px dotted #ddd;
    background: #fff;
  }

  .nested-tabs {
    background: #fff;
  }

  .n-move {
    width: 91px;
  }

  .n-wide {
    width: 305px;
    padding: 0 0 0 14px;
    justify-content: flex-start;
  }

  .n-wide .tool {
    margin-left: 45px;
  }

  .n-wide .tool:last-child {
    margin-left: 63px;
  }

  .nested .element {
    padding-left: 92px;
  }

  /* Side column */
  .side {
    flex: none;
    width: 738px;
    margin-left: 52px;
  }

  .notice {
    height: 60px;
    margin-bottom: 5px;
    border-bottom: 10px solid #efc468;
    border-radius: 0 0 7px 7px;
    background: #f8cd6c;
  }

  .notice svg {
    width: 738px;
    height: 60px;
  }

  .publish {
    height: 677px;
    display: flex;
    flex-direction: column;
    white-space: nowrap;
  }

  .preview {
    height: 123px;
    padding: 25px 27px 0 0;
    display: flex;
    justify-content: flex-end;
  }

  .outline {
    width: 333px;
    height: 79px;
    border: 2.600px solid #2271b1;
    border-radius: 8px;
    background: #f6f7f7;
    color: #2271b1;
    letter-spacing: -0.2px;
  }

  .status {
    height: 89px;
    padding: 0 0 13px 25px;
    display: flex;
    align-items: center;
    gap: 17px;
  }

  .status .dashicon {
    color: #8c8f94;
  }

  .edit-date {
    margin: -19px 0 0 27px;
  }

  footer {
    flex: none;
    height: 140px;
    margin-top: auto;
    padding: 0 27px;
    border-top: 2.600px solid #dcdcde;
    background: #f6f7f7;
    display: flex;
    align-items: center;
    justify-content: space-between;
  }

  .trash {
    padding-bottom: 5px;
    color: #b32d2e;
    letter-spacing: -0.3px;
  }

  .primary {
    width: 184px;
    height: 84px;
    border-radius: 8px;
    background: #2271b1;
    color: #fff;
    font-weight: 500;
  }

  .litespeed {
    height: 1156px;
    margin: 53px 0;
    white-space: nowrap;
  }

  .options {
    padding: 3px 31px 0 32px;
    letter-spacing: -0.2px;
  }

  .option {
    height: 74.200px;
    padding-right: 11px;
    display: flex;
    align-items: center;
    justify-content: space-between;
  }

  .toggle {
    width: 95px;
    height: 48px;
    padding: 5px;
    border-radius: 24px;
    background: #9ea3a7;
    box-shadow: inset 0 0 10px rgba(0, 0, 0, 0.08);
    display: flex;
    align-items: center;
  }

  .toggle.on {
    justify-content: flex-end;
    background: #2271b1;
  }

  .toggle i {
    width: 38px;
    height: 38px;
    border-radius: 50%;
    background: #fff;
  }

  .field {
    height: 368px;
    padding-top: 19px;
  }

  .field span {
    display: block;
    height: 44px;
    line-height: 44px;
  }

  .textarea {
    position: relative;
    width: 671px;
    height: 277px;
    margin-top: 3px;
    border: 2.600px solid #8c8f94;
    border-radius: 10px;
    background: #fff;
  }

  .textarea svg {
    position: absolute;
    right: 3px;
    bottom: 2px;
    width: 18px;
    height: 18px;
  }

  .learn {
    display: block;
    margin-top: 16px;
    text-align: right;
  }

  .rest {
    height: 100px;
  }

  .scrollbar {
    width: 36px;
    height: 2168px;
    padding: 86px 0 0 9px;
    border-left: 2px solid #e8e8e8;
    background: #fafafa;
  }

  .scrollbar i {
    display: block;
    width: 18px;
    height: 128px;
    border-radius: 9px;
    background: #c1c1c1;
  }

  .arrow {
    position: absolute;
    inset: 0;
    width: 4096px;
    height: 2168px;
    pointer-events: none;
  }
</style>
